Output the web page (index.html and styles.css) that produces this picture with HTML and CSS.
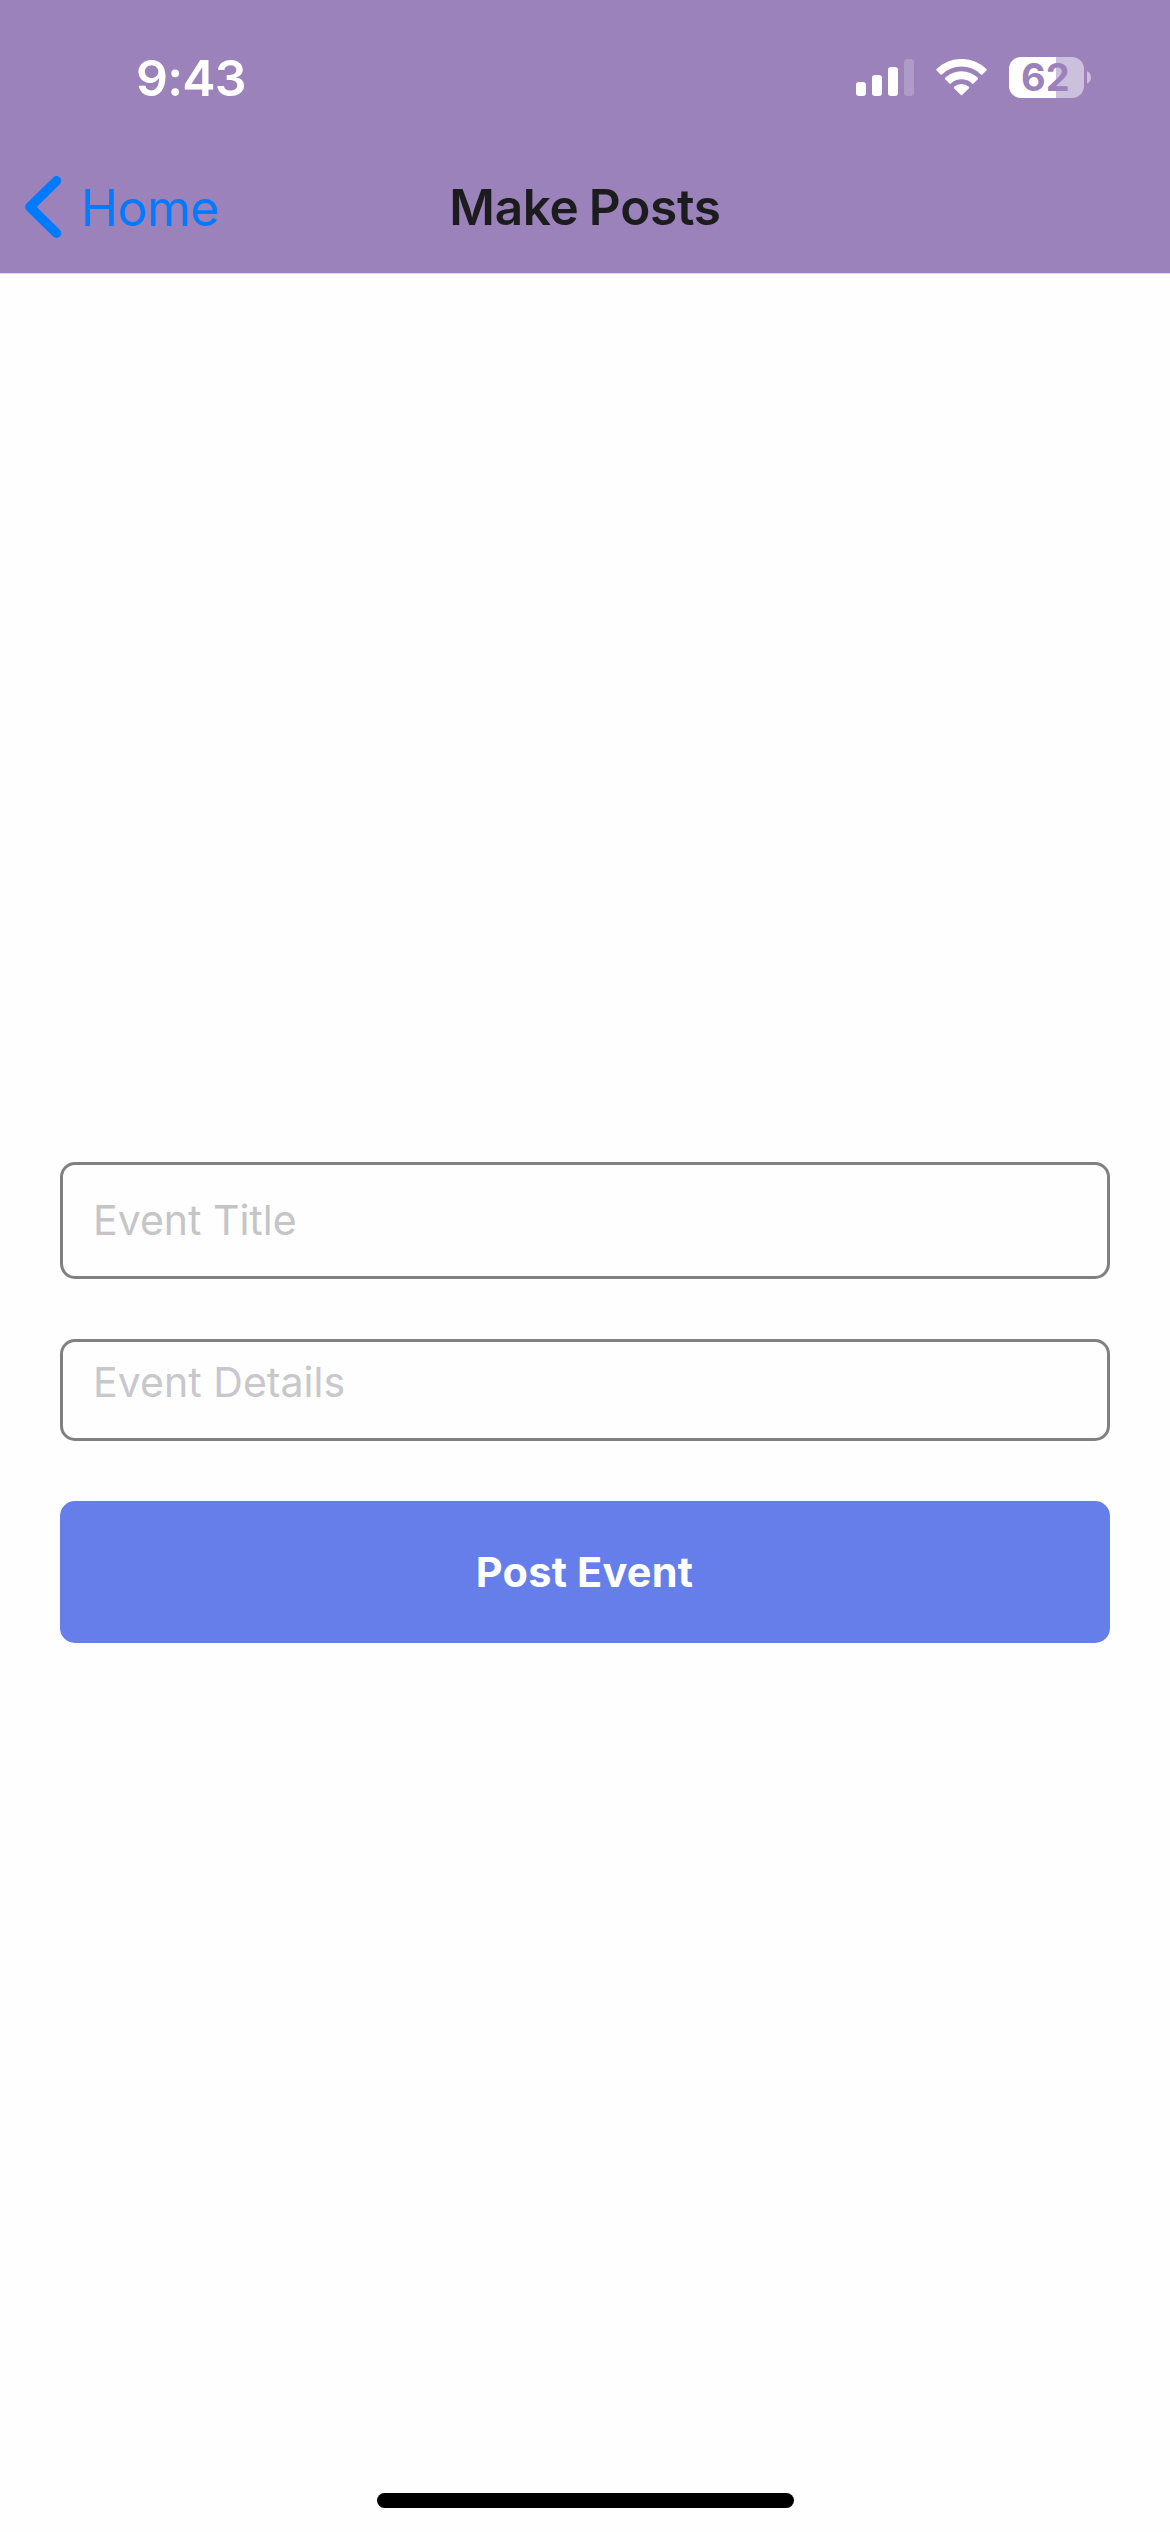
FILE: index.html
```html
<!DOCTYPE html>
<html lang="en">
<head>
<meta charset="utf-8">
<title>Make Posts</title>
<link rel="stylesheet" href="styles.css">
</head>
<body>
<div class="screen">
  <header class="header">
    <div class="status-bar">
      <span class="time">9:43</span>
      <div class="indicators">
        <svg class="signal" width="58" height="37" viewBox="0 0 58 37" fill="#fff">
          <rect x="0" y="23" width="10" height="14" rx="3"/>
          <rect x="16" y="16" width="10" height="21" rx="3"/>
          <rect x="32" y="8" width="10" height="29" rx="3"/>
          <rect x="48" y="0" width="10" height="37" rx="3" opacity=".2"/>
        </svg>
        <svg class="wifi" width="51" height="37" viewBox="0 0 51 37" fill="#fff">
          <path d="M.6 10.1A35.6 35.6 0 0 1 50.4 10.1Q51 10.8 50.4 11.5L46.4 15.4Q45.7 16 45 15.4A28.2 28.2 0 0 0 6 15.4Q5.3 16 4.6 15.4L.6 11.5Q0 10.8.6 10.1Z"/>
          <path d="M9.2 18.8A23.6 23.6 0 0 1 41.8 18.8Q42.5 19.5 41.8 20.2L37.5 24.4Q36.8 25 36.1 24.4A15.6 15.6 0 0 0 14.9 24.4Q14.2 25 13.5 24.4L9.2 20.2Q8.5 19.5 9.2 18.8Z"/>
          <path d="M18.1 27.8A11.4 11.4 0 0 1 32.9 27.8Q33.6 28.5 32.9 29.3L26.2 36.1Q25.5 36.8 24.8 36.1L18.1 29.3Q17.4 28.5 18.1 27.8Z"/>
        </svg>
        <svg class="battery" width="83" height="41" viewBox="0 0 83 41">
          <path d="M12 0H47V41H12A12 12 0 0 1 0 29V12A12 12 0 0 1 12 0Z" fill="#fff"/>
          <path d="M47 0H63A12 12 0 0 1 75 12V29A12 12 0 0 1 63 41H47Z" fill="#cdc0dd"/>
          <path d="M78 14.3Q82 16.2 82 20.5T78 26.7Z" fill="#cdc0dd"/>
          <text class="battery-level" x="36.4" y="34" text-anchor="middle">62</text>
        </svg>
      </div>
    </div>
    <nav class="nav-bar">
      <a class="back">
        <svg width="37" height="62" viewBox="0 0 37 62" fill="none" stroke="#007aff" stroke-width="9.5" stroke-linecap="round" stroke-linejoin="round">
          <path d="M31.5 4.8L4.9 31L31.5 57.2"/>
        </svg>
        <span class="back-label">Home</span>
      </a>
      <h1 class="title">Make Posts</h1>
    </nav>
  </header>
  <main class="form">
    <div class="field field-title">Event Title</div>
    <div class="field field-details">Event Details</div>
    <button class="submit">Post Event</button>
  </main>
  <footer class="footer"><div class="home-indicator"></div></footer>
</div>
</body>
</html>
```
FILE: styles.css
```css
* { box-sizing: border-box; }
body { margin: 0; background: #fff; font-family: Inter, "Liberation Sans", sans-serif; }
.screen { width: 1170px; height: 2532px; display: flex; flex-direction: column; background: #fefefe; }
.header { height: 274px; background: #9b82bb; border-bottom: 1px solid #e1dbe9; }
.status-bar { height: 141px; padding: 48px 78px 0 136px; display: flex; justify-content: space-between; align-items: flex-start; }
.time { font-size: 50px; line-height: 60px; font-weight: 600; color: #fff; letter-spacing: -0.8px; }
.indicators { display: flex; padding-top: 9px; }
.signal { margin-top: 2px; }
.wifi { margin: 2px 22px 0; }
.battery-level { font-size: 38px; font-weight: 700; fill: #9b82bb; }
.nav-bar { height: 132px; display: grid; grid-template-columns: 1fr auto 1fr; align-items: center; }
.back { display: flex; align-items: center; gap: 19px; padding-left: 25px; }
.back-label { padding-top: 2px; font-size: 50px; line-height: 60px; color: #007aff; letter-spacing: -0.5px; }
.title { margin: 0; font-size: 49.5px; line-height: 60px; font-weight: 600; color: #1c1c1e; letter-spacing: -0.25px; word-spacing: -2px; }
.form { flex: 1; padding: 888px 60px 0; display: flex; flex-direction: column; gap: 60px; }
.field { border: 3px solid #808080; border-radius: 15px; padding-left: 30px; display: flex; align-items: flex-start; font-size: 41px; line-height: 50px; }
.field-title { height: 117px; padding-top: 30px; color: #c5c5c7; }
.field-details { height: 102px; padding-top: 15px; color: #c7c7cc; letter-spacing: 0.05px; }
.submit { height: 142px; padding: 0 1px 1px 0; border: 0; border-radius: 15px; background: #667eea; color: #fff; font-family: inherit; font-size: 41.5px; line-height: 50px; font-weight: 700; letter-spacing: 0.2px; }
.footer { height: 39px; display: flex; justify-content: center; }
.home-indicator { width: 417px; height: 15px; border-radius: 8px; background: #000; }
```
